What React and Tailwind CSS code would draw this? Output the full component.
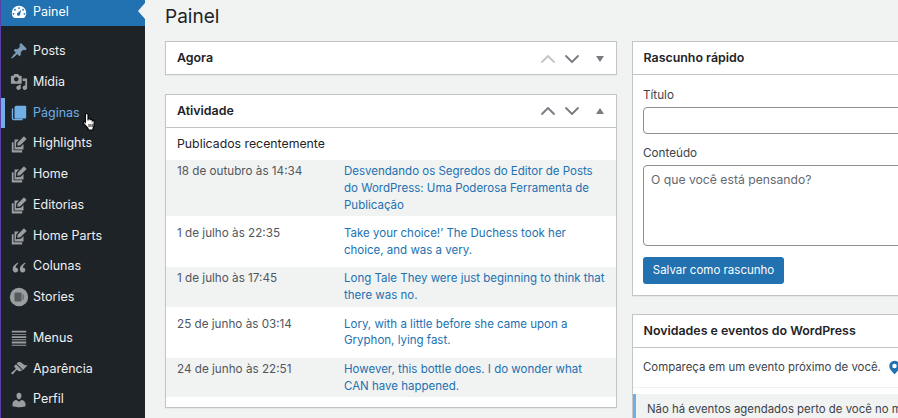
import React from "react";
import { ChevronUp, ChevronDown } from "lucide-react";

const font = "font-['Inter','Liberation_Sans',sans-serif]";

/* dashicons, 20x20 box */
const icons = {
  gauge: <path fillRule="evenodd" d="M10 3a8 8 0 0 1 8 8c0 2.200-.9 4.300-2.400 5.800H4.400A8.200 8.200 0 0 1 2 11a8 8 0 0 1 8-8zM10 4.600a1 1 0 1 0 0 2 1 1 0 0 0 0-2zM5.500 6.500a1 1 0 1 0 0 2 1 1 0 0 0 0-2zM14.500 6.500a1 1 0 1 0 0 2 1 1 0 0 0 0-2zM4 11a1 1 0 1 0 0 2 1 1 0 0 0 0-2zM16 11a1 1 0 1 0 0 2 1 1 0 0 0 0-2zM12.600 7.400 9.300 10.600a1.800 1.800 0 1 0 2 1.400z" />,
  pin: <path d="M10.440 3.020l1.820-1.820 6.360 6.350-1.830 1.820c-1.050-.68-2.480-.57-3.410.36l-.75.75c-.92.93-1.040 2.350-.35 3.410l-1.830 1.820-2.410-2.410-2.800 2.790c-.42.42-3.380 2.710-3.800 2.290s1.860-3.390 2.280-3.810l2.790-2.790L4.100 9.360l1.830-1.820c1.050.69 2.480.57 3.400-.36l.75-.75c.93-.92 1.050-2.350.36-3.410z" />,
  media: <path fillRule="evenodd" d="M13 11V4c0-.55-.45-1-1-1h-1.670L9 1H5L3.670 3H2c-.55 0-1 .45-1 1v7c0 .55.45 1 1 1h10c.55 0 1-.45 1-1zM7 4.500c1.380 0 2.500 1.120 2.500 2.500S8.380 9.500 7 9.500 4.500 8.380 4.500 7 5.620 4.500 7 4.500zM14 6h5v10.500c0 1.380-1.120 2.500-2.500 2.500S14 17.880 14 16.500s1.120-2.500 2.500-2.500c.17 0 .34.020.5.050V9h-3V6zm-4 8.050V13h2v3.500c0 1.380-1.120 2.500-2.500 2.500S7 17.880 7 16.500 8.120 14 9.500 14c.17 0 .34.020.5.050z" />,
  pages: <path d="M7 2h10a1 1 0 0 1 1 1v12a1 1 0 0 1-1 1H6a1 1 0 0 1-1-1V4a2 2 0 0 1 2-2zM3.500 5v11.500H14V18H4a2 2 0 0 1-2-2V6a1 1 0 0 1 1.500-1z" />,
  edit: <path d="M15.500 1.500l3 3-7 7-3.500.5.500-3.500zM5 5h5L7 8l-.5 5.500 5.500-.5 3-3v6H5zM2 8h2v9h9.500v2.500H2z" />,
  quote: <path d="M9 5C6 6.500 3 9 3 12.500 3 14.500 4.200 16 6 16s3-1.200 3-2.800-1.200-2.700-2.700-2.700c0-1.500 1.200-3 2.700-4zM17 5c-3 1.500-6 4-6 7.500 0 2 1.200 3.500 3 3.500s3-1.200 3-2.800-1.200-2.700-2.700-2.700c0-1.500 1.200-3 2.700-4z" />,
  stories: (
    <>
      <circle cx="10" cy="10" r="9.200" />
      <rect x="5.500" y="5.500" width="7" height="9" rx="1" fill="#1d2327" fillOpacity="0.55" />
      <path d="M13.500 6.500c1 .5 1.500 1.500 1.500 3.500s-.5 3-1.500 3.500z" fill="#1d2327" fillOpacity="0.4" />
    </>
  ),
  menus: <path d="M2 2h16v2H2zM2 5.500h16v1H2zM2 8h16v2H2zM2 11.500h16v1H2zM2 14h16v2H2zM2 17.500h16v1H2z" />,
  brush: <path d="M14.480 11.060L7.410 3.990l1.500-1.500c.5-.56 2.300-.47 3.510.32 1.210.8 1.430 1.280 2.910 2.100 1.180.64 2.450 1.260 4.230.91zm-.71.71L6.700 4.700 4.930 6.470c-.39.39-.39 1.020 0 1.410l1.060 1.060c.39.39.39 1.030 0 1.420-.6.600-1.430 1.270-2.210 1.840-.35.260-.7.530-1.010.760-.15.110-.31.220-.45.330l-.1.070c-.14.100-.28.190-.41.330-.21.220-.33.510-.33.810 0 .3.120.590.330.810l.18.180c.22.210.51.330.810.330.3 0 .59-.12.810-.33.140-.14.240-.28.340-.43l.07-.1c.1-.15.21-.3.330-.45.23-.31.500-.66.760-1.010.57-.78 1.240-1.610 1.840-2.210.39-.39 1.030-.39 1.420 0l1.060 1.060c.39.39 1.020.39 1.410 0z" />,
  user: <path d="M10 9.250c-2.270 0-2.730-3.440-2.730-3.440C7 4.020 7.820 2 9.970 2c2.160 0 2.980 2.020 2.710 3.810 0 0-.41 3.440-2.680 3.440zm0 2.570L12.720 10c2.390 0 4.520 2.330 4.520 4.530v2.490s-3.650 1.130-7.240 1.130c-3.650 0-7.240-1.130-7.240-1.130v-2.490c0-2.250 1.940-4.530 4.430-4.530z" />,
};

const Icon = ({ name, className = "w-[18px] h-[18px]" }) => (
  <svg viewBox="0 0 20 20" fill="currentColor" className={className}>{icons[name]}</svg>
);

const menu = [
  { label: "Posts", icon: "pin", tint: "text-[#7d9ab8]" },
  { label: "Mídia", icon: "media" },
  { label: "Páginas", icon: "pages", active: true },
  { label: "Highlights", icon: "edit" },
  { label: "Home", icon: "edit" },
  { label: "Editorias", icon: "edit" },
  { label: "Home Parts", icon: "edit" },
  { label: "Colunas", icon: "quote" },
  { label: "Stories", icon: "stories", big: true },
  { label: "Menus", icon: "menus", gap: true },
  { label: "Aparência", icon: "brush" },
  { label: "Perfil", icon: "user" },
];

const posts = [
  ["18 de outubro às 14:34", "Desvendando os Segredos do Editor de Posts do WordPress: Uma Poderosa Ferramenta de Publicação"],
  ["1 de julho às 22:35", "Take your choice!’ The Duchess took her choice, and was a very."],
  ["1 de julho às 17:45", "Long Tale They were just beginning to think that there was no."],
  ["25 de junho às 03:14", "Lory, with a little before she came upon a Gryphon, lying fast."],
  ["24 de junho às 22:51", "However, this bottle does. I do wonder what CAN have happened."],
];

const Cursor = () => (
  <svg viewBox="0 0 16 20" className="absolute left-[81px] top-[14px] w-[15px] h-[19px]">
    <path d="M5 1.500c.8 0 1.400.6 1.400 1.400V9l.2-2c.7-.6 1.800-.3 2 .5l.1 1 .2-.6c.6-.6 1.700-.4 1.900.5l.1.8.2-.4c.7-.5 1.700-.1 1.800.8V14c0 1.500-.6 2.500-1.200 3.500V19H6.500v-1.500L1.700 12c-.8-1.100.4-2.300 1.500-1.500l.4.4V2.900c0-.8.600-1.400 1.400-1.400z" fill="#fff" stroke="#000" strokeWidth="1.200" />
    <path d="M7.500 12.500v3.500M9.500 12.500v3.500M11.500 12.500v3.500" stroke="#000" strokeWidth="0.900" />
  </svg>
);

const Sidebar = () => (
  <aside className="w-[145px] shrink-0 bg-[#1d2327] border-l border-[#5b3fa8] text-[12.500px] text-[#f0f0f1]">
    <div className="relative h-[26px] pb-[2px] bg-[#2271b1] flex items-center pl-[9px] text-white">
      <Icon name="gauge" />
      <span className="ml-[5px]">Painel</span>
      <span className="absolute right-0 top-[3px] border-y-[8px] border-r-[7px] border-y-transparent border-r-[#f1f2f2]" />
    </div>
    <nav className="pt-[10px]">
      {menu.map((m) => (
        <div key={m.label} className={`relative h-[30.750px] flex items-center pl-[9px] ${m.gap ? "mt-[10px]" : ""}`}>
          {m.active && <span className="absolute left-0 top-0 h-full w-[4px] bg-[#72aee6]" />}
          <Icon
            name={m.icon}
            className={`${m.big ? "w-[20px] h-[20px] -mx-[1px]" : "w-[18px] h-[18px]"} ${m.active ? "text-[#72aee6]" : m.tint || "text-[#9b9ea1]"}`}
          />
          <span className={`ml-[5px] ${m.active ? "text-[#72aee6]" : ""}`}>{m.label}</span>
          {m.active && <Cursor />}
        </div>
      ))}
    </nav>
  </aside>
);

const Handles = ({ up }) => (
  <div className="flex items-center text-[#787c82]">
    <ChevronUp size={24} strokeWidth={1.800} className={up ? "" : "text-[#c3c4c7]"} />
    <ChevronDown size={24} strokeWidth={1.800} />
    <span className={`ml-[12px] mr-[12px] border-x-[4px] border-x-transparent ${up ? "border-b-[6px] border-b-[#787c82]" : "border-t-[6px] border-t-[#787c82]"}`} />
  </div>
);

const Card = ({ title, handles, up, children, className = "" }) => (
  <section className={`bg-white border border-[#c3c4c7] shadow-[0_1px_1px_rgba(0,0,0,0.04)] ${className}`}>
    <header className={`flex items-center justify-between pl-[11px] ${children ? "h-[33px] border-b border-[#c3c4c7]" : "h-[32px] pt-[1px]"}`}>
      <h2 className="text-[12.400px] font-semibold text-[#1d2327]">{title}</h2>
      {handles && <Handles up={up} />}
    </header>
    {children}
  </section>
);

const Activity = () => (
  <Card title="Atividade" handles up className="mt-[19px] h-[314px]">
    <h3 className="h-[32px] flex items-center pl-[11px] text-[12.300px] text-[#1d2327]">Publicados recentemente</h3>
    {posts.map(([date, title], i) => (
      <div key={date} className={`flex leading-[16.700px] ${i % 2 === 0 ? "bg-[#f1f2f2] py-[3.100px]" : "py-[8.800px]"}`}>
        <span className="w-[178px] shrink-0 pl-[11px] text-[11.700px] text-[#50575e]">{date}</span>
        <a className="w-[263px] text-[11.500px] text-[#2271b1]">{title}</a>
      </div>
    ))}
  </Card>
);

const QuickDraft = () => (
  <Card title="Rascunho rápido" className="h-[255px]">
    <div className="pl-[10.500px] text-[#3c434a]">
      <label className="block mt-[12px] mb-[3px] leading-[17px] text-[11.700px]">Título</label>
      <div className="w-[300px] h-[27px] bg-white border border-[#8c8f94] rounded-[4px]" />
      <label className="block mt-[11px] mb-[3px] leading-[17px] text-[11.700px]">Conteúdo</label>
      <div className="w-[300px] h-[81px] bg-white border border-[#8c8f94] rounded-[4px] px-[7px] py-[5px] leading-[18px] text-[12.200px] text-[#646970]">O que você está pensando?</div>
      <button className="block mt-[11px] h-[27px] w-[141px] bg-[#2271b1] rounded-[3px] text-white text-[11.500px]">Salvar como rascunho</button>
    </div>
  </Card>
);

const News = () => (
  <Card title="Novidades e eventos do WordPress" className="mt-[18px] w-[320px]">
    <div className="h-[40px] flex items-center pl-[10.500px] border-b border-[#f0f0f1] text-[11.400px] text-[#3c434a] whitespace-nowrap">
      Compareça em um evento próximo de você.
      <svg viewBox="0 0 20 20" className="ml-[6px] w-[15px] h-[15px] shrink-0 text-[#2271b1]" fill="currentColor">
        <path fillRule="evenodd" d="M10 1a7 7 0 0 1 7 7c0 4-4.500 8.500-7 11-2.500-2.500-7-7-7-11a7 7 0 0 1 7-7zm0 4a3 3 0 1 0 0 6 3 3 0 0 0 0-6z" />
      </svg>
    </div>
    <div className="mt-[6px] h-[40px] bg-[#f1f2f2] border-l-[3px] border-[#72aee6] pl-[11.500px] pt-[7px] text-[11.400px] text-[#3c434a] whitespace-nowrap overflow-hidden">
      Não há eventos agendados perto de você no momento
    </div>
  </Card>
);

export default function App() {
  return (
    <div className={`${font} w-[898px] h-[418px] overflow-hidden flex bg-[#f1f2f2]`}>
      <Sidebar />
      <main className="flex-1 min-w-0 pl-[20px]">
        <h1 className="h-[41px] pt-[4px] text-[19px] leading-[26px] text-[#1d2327]">Painel</h1>
        <div className="flex gap-[14.500px]">
          <div className="w-[452px] shrink-0">
            <Card title="Agora" handles />
            <Activity />
          </div>
          <div className="w-[300px] shrink-0">
            <QuickDraft />
            <News />
          </div>
        </div>
      </main>
    </div>
  );
}
